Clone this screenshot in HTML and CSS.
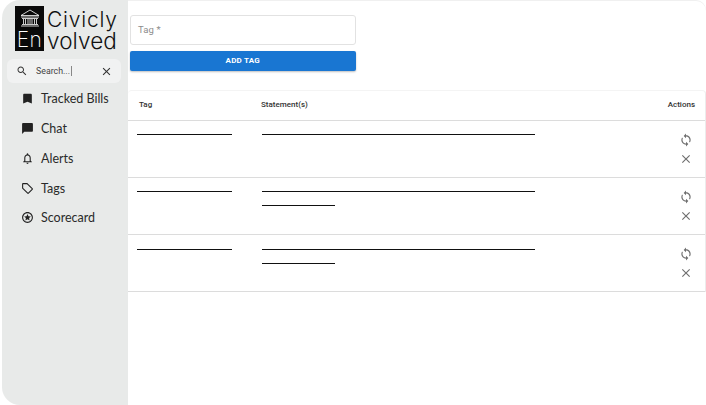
FILE: index.html
```html
<!DOCTYPE html>
<html lang="en">
<head>
<meta charset="utf-8">
<title>Civicly Envolved</title>
<link rel="stylesheet" href="styles.css">
</head>
<body>
<div class="app">
  <aside class="sidebar">
    <div class="logo">
      <div class="logo-box">
        <svg class="logo-mark" viewBox="0 0 20 18" width="20" height="18" fill="none" stroke="#fff" stroke-width="0.8">
          <path d="M1 6.500 10 1l9 5.500zM1 8h18M2 9.500h16M2 15.500h16M1 17h18"/>
          <path d="M3.500 10v5M5.500 10v5M8 10v5M10 10v5M12 10v5M14.500 10v5M16.500 10v5"/>
        </svg>
        <span class="logo-en">En</span>
      </div>
      <div class="logo-words">
        <span>Civicly</span>
        <span class="logo-second">volved</span>
      </div>
    </div>
    <div class="search">
      <svg class="icon-search" viewBox="0 0 24 24"><path d="M15.500 14h-.79l-.28-.27C15.410 12.590 16 11.110 16 9.500 16 5.910 13.090 3 9.500 3S3 5.910 3 9.500 5.910 16 9.500 16c1.610 0 3.090-.59 4.230-1.570l.27.28v.79l5 4.990L20.490 19l-4.990-5zm-6 0C7.010 14 5 11.990 5 9.500S7.010 5 9.500 5 14 7.010 14 9.500 11.990 14 9.500 14z"/></svg>
      <span class="search-text">Search...</span><span class="caret"></span>
      <svg class="icon-clear" viewBox="0 0 24 24"><path d="M19 6.410 17.590 5 12 10.590 6.410 5 5 6.410 10.590 12 5 17.590 6.410 19 12 13.410 17.590 19 19 17.590 13.410 12z"/></svg>
    </div>
    <nav class="nav">
      <div class="nav-item">
        <svg class="nav-icon" viewBox="0 0 24 24"><path d="M18 3H6c-1.100 0-2 .9-2 2v16l8-3 8 3V5c0-1.100-.9-2-2-2z"/></svg>
        <span>Tracked Bills</span>
      </div>
      <div class="nav-item">
        <svg class="nav-icon" viewBox="0 0 24 24"><path d="M20 2H4c-1.100 0-2 .9-2 2v18l4-4h14c1.100 0 2-.9 2-2V4c0-1.100-.9-2-2-2z"/></svg>
        <span>Chat</span>
      </div>
      <div class="nav-item">
        <svg class="nav-icon" viewBox="0 0 24 24"><path d="M12 22c1.100 0 2-.9 2-2h-4c0 1.100.9 2 2 2zm6-6v-5c0-3.070-1.630-5.640-4.500-6.320V4c0-.83-.67-1.500-1.500-1.500s-1.500.67-1.500 1.500v.68C7.640 5.360 6 7.920 6 11v5l-2 2v1h16v-1l-2-2zm-2 1H8v-6c0-2.480 1.510-4.500 4-4.500s4 2.020 4 4.500v6z"/></svg>
        <span>Alerts</span>
      </div>
      <div class="nav-item">
        <svg class="nav-icon" viewBox="0 0 24 24"><path d="M21.410 11.580l-9-9C12.050 2.220 11.550 2 11 2H4c-1.100 0-2 .9-2 2v7c0 .55.22 1.050.59 1.420l9 9c.36.36.86.58 1.410.58s1.050-.22 1.410-.59l7-7c.37-.36.59-.86.59-1.410s-.23-1.060-.59-1.420zM13 20.010 4 11V4h7v-.01l9 9-7 7.020z"/></svg>
        <span>Tags</span>
      </div>
      <div class="nav-item">
        <svg class="nav-icon" viewBox="0 0 24 24"><path d="M11.990 2C6.470 2 2 6.480 2 12s4.470 10 9.990 10C17.520 22 22 17.520 22 12S17.520 2 11.990 2zM12 20c-4.420 0-8-3.580-8-8s3.580-8 8-8 8 3.580 8 8-3.580 8-8 8z"/><path d="M12 5.500l1.800 4.100 4.500.4-3.400 3 1 4.400L12 15.100l-3.900 2.300 1-4.400-3.400-3 4.500-.4z"/></svg>
        <span>Scorecard</span>
      </div>
    </nav>
  </aside>
  <main class="main">
    <form class="tag-form">
      <div class="tag-input">Tag *</div>
      <div class="add-button">ADD TAG</div>
    </form>
    <section class="table">
      <div class="row head">
        <div>Tag</div>
        <div>Statement(s)</div>
        <div class="actions-title">Actions</div>
      </div>
      <div class="row body">
        <div class="cell-tag"><div class="rule"></div></div>
        <div class="cell-statement"><div class="rule full"></div></div>
        <div class="actions">
          <svg class="action" viewBox="0 0 24 24"><path d="M12 4V1L8 5l4 4V6c3.310 0 6 2.690 6 6 0 1.010-.25 1.970-.7 2.800l1.460 1.460C19.540 15.030 20 13.570 20 12c0-4.420-3.580-8-8-8zm0 14c-3.310 0-6-2.690-6-6 0-1.010.25-1.970.7-2.800L5.240 7.740C4.460 8.970 4 10.430 4 12c0 4.420 3.580 8 8 8v3l4-4-4-4v3z"/></svg>
          <svg class="action" viewBox="0 0 24 24"><path d="M19 6.410 17.590 5 12 10.590 6.410 5 5 6.410 10.590 12 5 17.590 6.410 19 12 13.410 17.590 19 19 17.590 13.410 12z"/></svg>
        </div>
      </div>
      <div class="row body">
        <div class="cell-tag"><div class="rule"></div></div>
        <div class="cell-statement"><div class="rule full"></div><div class="rule short"></div></div>
        <div class="actions">
          <svg class="action" viewBox="0 0 24 24"><path d="M12 4V1L8 5l4 4V6c3.310 0 6 2.690 6 6 0 1.010-.25 1.970-.7 2.800l1.460 1.460C19.540 15.030 20 13.570 20 12c0-4.420-3.580-8-8-8zm0 14c-3.310 0-6-2.690-6-6 0-1.010.25-1.970.7-2.800L5.240 7.740C4.460 8.970 4 10.430 4 12c0 4.420 3.580 8 8 8v3l4-4-4-4v3z"/></svg>
          <svg class="action" viewBox="0 0 24 24"><path d="M19 6.410 17.590 5 12 10.590 6.410 5 5 6.410 10.590 12 5 17.590 6.410 19 12 13.410 17.590 19 19 17.590 13.410 12z"/></svg>
        </div>
      </div>
      <div class="row body">
        <div class="cell-tag"><div class="rule"></div></div>
        <div class="cell-statement"><div class="rule full"></div><div class="rule short"></div></div>
        <div class="actions">
          <svg class="action" viewBox="0 0 24 24"><path d="M12 4V1L8 5l4 4V6c3.310 0 6 2.690 6 6 0 1.010-.25 1.970-.7 2.800l1.460 1.460C19.540 15.030 20 13.570 20 12c0-4.420-3.580-8-8-8zm0 14c-3.310 0-6-2.690-6-6 0-1.010.25-1.970.7-2.800L5.240 7.740C4.460 8.970 4 10.430 4 12c0 4.420 3.580 8 8 8v3l4-4-4-4v3z"/></svg>
          <svg class="action" viewBox="0 0 24 24"><path d="M19 6.410 17.590 5 12 10.590 6.410 5 5 6.410 10.590 12 5 17.590 6.410 19 12 13.410 17.590 19 19 17.590 13.410 12z"/></svg>
        </div>
      </div>
    </section>
  </main>
</div>
</body>
</html>
```
FILE: styles.css
```css
* { box-sizing: border-box; }
html, body { margin: 0; height: 100%; background: #fff; overflow: hidden; }
body { font-family: Roboto, "Liberation Sans", sans-serif; color: #1f1f1f; }
.app { display: flex; width: 706px; height: 405px; padding: 0 0 0 2px; }
.sidebar {
  width: 126px; height: 405px; flex: none;
  background: #e8eae9;
  border-radius: 18px 0 0 18px;
  padding: 6px 5px 0;
}
.logo { display: flex; padding-left: 8px; height: 45px; }
.logo-box {
  width: 29px; height: 45px; background: #0a0a0a;
  display: flex; flex-direction: column; align-items: center;
  padding-top: 3px; overflow: hidden;
}
.logo-mark { flex: none; }
.logo-en { color: #fff; font-family: Inter, Roboto, sans-serif; font-weight: 200; font-size: 21px; line-height: 25px; letter-spacing: 0.5px; }
.logo-words {
  display: flex; flex-direction: column; padding: 3px 0 0 3px;
  font-family: Inter, Roboto, sans-serif; font-weight: 300; font-size: 21px; line-height: 21px; color: #111; letter-spacing: 0.8px;
}
.logo-second { font-size: 22.5px; letter-spacing: 0.1px; }
.search {
  margin-top: 8px; height: 24px; width: 114px;
  background: #f1f2f2; border-radius: 6px;
  display: flex; align-items: center; padding: 0 8px 0 9px;
  font-size: 8.8px; color: #444;
}
.icon-search { width: 12px; height: 12px; fill: #333; flex: none; margin-right: 8px; }
.caret { width: 1px; height: 10px; background: #888; margin-left: 1px; }
.icon-clear { width: 13px; height: 13px; fill: #333; margin-left: auto; }
.nav { margin-top: 1px; }
.nav-item {
  height: 29.75px; display: flex; align-items: center; padding-left: 14px;
  font-family: Lato, "Liberation Sans", sans-serif; font-size: 12.5px; color: #2a2a2a;
}
.nav-icon { width: 13px; height: 13px; fill: #222; flex: none; margin-right: 7px; }
.main { flex: 1; min-width: 0; display: flex; flex-direction: column; box-shadow: inset 0 1px 0 #f0f0f0; border-top-right-radius: 10px; }
.tag-form { padding: 15px 0 0 2px; width: 227.5px; }
.tag-input {
  height: 30px; border: 1px solid #e2e2e2; border-radius: 3px;
  display: flex; align-items: center; padding: 0 0 2px 7px;
  font-size: 9.5px; color: #8c8c8c; letter-spacing: 0.1px;
}
.add-button {
  margin-top: 6px; height: 20px; background: #1976d2; border-radius: 2px;
  display: flex; align-items: center; justify-content: center; padding-bottom: 2px;
  color: #fff; font-size: 8px; font-weight: 700; letter-spacing: 0.2px;
  box-shadow: 0 1px 2px rgba(0,0,0,.25);
}
.table {
  margin-top: 19px; border-top: 1px solid #f4f4f4; border-right: 1px solid #ececec;
  border-radius: 4px 4px 0 0;
}
.row { display: grid; grid-template-columns: 132px 1fr 60px; border-bottom: 1px solid #dcdcdc; }
.head {
  height: 30px; align-items: center; font-size: 8px; font-weight: 500; color: #333;
  padding: 0 10px 2px 11px; grid-template-columns: 122px 1fr 60px;
}
.actions-title { text-align: right; }
.body { height: 57px; padding-top: 13px; }
.body:last-child .cell-tag, .body:last-child .cell-statement { padding-top: 1px; }
.cell-tag { padding-left: 9px; }
.cell-statement { padding-left: 2px; }
.rule { height: 1px; background: #111; width: 95px; }
.rule.full { width: 273px; }
.rule.short { width: 73px; margin-top: 13px; }
.actions { display: flex; flex-direction: column; align-items: flex-end; gap: 5px; padding-right: 12px; margin-top: -1px; }
.action { width: 14px; height: 14px; fill: #6f6f6f; flex: none; }
```
